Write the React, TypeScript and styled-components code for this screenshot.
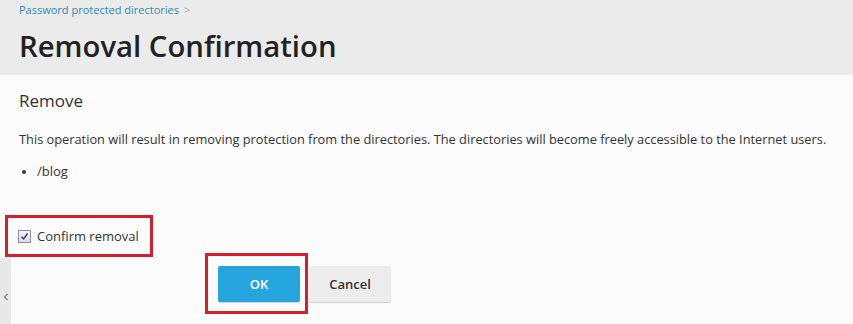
import React from "react";
import styled, { createGlobalStyle } from "styled-components";

const Global = createGlobalStyle`
  html, body { margin: 0; padding: 0; background: #fbfbfb; }
  body { font-family: "Open Sans", "Noto Sans", sans-serif; color: #333; }
  * { box-sizing: border-box; }
`;

const Page = styled.div`
  width: 853px;
  height: 324px;
  overflow: hidden;
  display: flex;
  flex-direction: column;
  background: #fbfbfb;
`;

const Header = styled.header`
  height: 75px;
  flex: none;
  background: #ebebeb;
  padding: 2px 20px 0 19px;
  display: flex;
  flex-direction: column;
`;

const Crumbs = styled.div`
  display: flex;
  align-items: center;
  gap: 5px;
  font-size: 11px;
  line-height: 16px;
  color: #2a8bb0;
`;

const Sep = styled.span`
  color: #aaa;
  font-size: 11px;
`;

const Title = styled.h1`
  margin: 9px 0 0 0;
  font-size: 29.3px;
  line-height: 38px;
  font-weight: 600;
  color: #222;
`;

const Body = styled.main`
  flex: 1;
  display: flex;
  position: relative;
  overflow: hidden;
`;

const SideStrip = styled.div`
  position: absolute;
  left: 0;
  top: 183px;
  width: 11px;
  height: 78px;
  background: #e8e8e8;
  display: flex;
  align-items: center;
  justify-content: center;
  color: #777;
`;

const Content = styled.div`
  flex: 1;
  padding: 14px 20px 0 19px;
  display: flex;
  flex-direction: column;
`;

const SectionTitle = styled.h2`
  margin: 0;
  font-size: 17px;
  line-height: 24px;
  font-weight: 400;
  color: #333;
`;

const Text = styled.p`
  margin: 17px 0 0 0;
  font-size: 12.8px;
  line-height: 18px;
  color: #333;
  white-space: nowrap;
`;

const List = styled.ul`
  margin: 14px 0 0 0;
  padding: 0 0 0 18px;
  font-size: 13px;
  line-height: 18px;
  li::marker { font-size: 11px; }
`;

const Highlight = styled.div`
  border: 3px solid #d3202f;
`;

const ConfirmBox = styled(Highlight)`
  margin: 35px 0 0 -14px;
  width: 148px;
  height: 42px;
  display: flex;
  align-items: center;
  padding-left: 10px;
  gap: 6px;
  font-size: 13px;
  color: #333;
`;

const Check = styled.span`
  width: 13px;
  height: 13px;
  border: 1px solid #8c8c9c;
  background: linear-gradient(#f1f1f6, #dcdce6);
  display: flex;
  align-items: center;
  justify-content: center;
`;

const Buttons = styled.div`
  display: flex;
  align-items: center;
  margin: -4px 0 0 186px;
`;

const OkFrame = styled(Highlight)`
  width: 103px;
  height: 61px;
  display: flex;
  align-items: center;
  justify-content: flex-end;
  padding-right: 5px;
`;

const Button = styled.button<{ $primary?: boolean }>`
  width: 82px;
  height: 36px;
  border: none;
  border-radius: 2px;
  font-family: "Open Sans", sans-serif;
  font-size: 13px;
  font-weight: 600;
  cursor: pointer;
  background: ${(p) => (p.$primary ? "#24a5dd" : "#ececec")};
  color: ${(p) => (p.$primary ? "#fff" : "#333")};
  box-shadow: 0 1px 1px rgba(0, 0, 0, 0.18);
`;

const CancelButton = styled(Button)`
  margin-left: 1px;
`;

export default function App() {
  return (
    <Page>
      <Global />
      <Header>
        <Crumbs>
          <span>Password protected directories</span>
          <Sep>&gt;</Sep>
        </Crumbs>
        <Title>Removal Confirmation</Title>
      </Header>
      <Body>
        <SideStrip>
          <svg width="6" height="8" viewBox="0 0 6 8">
            <path d="M4.5 1 L1.5 4 L4.5 7" fill="none" stroke="#777" strokeWidth="1.1" />
          </svg>
        </SideStrip>
        <Content>
          <SectionTitle>Remove</SectionTitle>
          <Text>
            This operation will result in removing protection from the directories. The directories will become
            freely accessible to the Internet users.
          </Text>
          <List>
            <li>/blog</li>
          </List>
          <ConfirmBox>
            <Check>
              <svg width="9" height="9" viewBox="0 0 9 9">
                <path d="M1.5 4.8 L3.6 7 L7.5 1.5" fill="none" stroke="#2a3a8c" strokeWidth="1.4" />
              </svg>
            </Check>
            <span>Confirm removal</span>
          </ConfirmBox>
          <Buttons>
            <OkFrame>
              <Button $primary>OK</Button>
            </OkFrame>
            <CancelButton>Cancel</CancelButton>
          </Buttons>
        </Content>
      </Body>
    </Page>
  );
}
